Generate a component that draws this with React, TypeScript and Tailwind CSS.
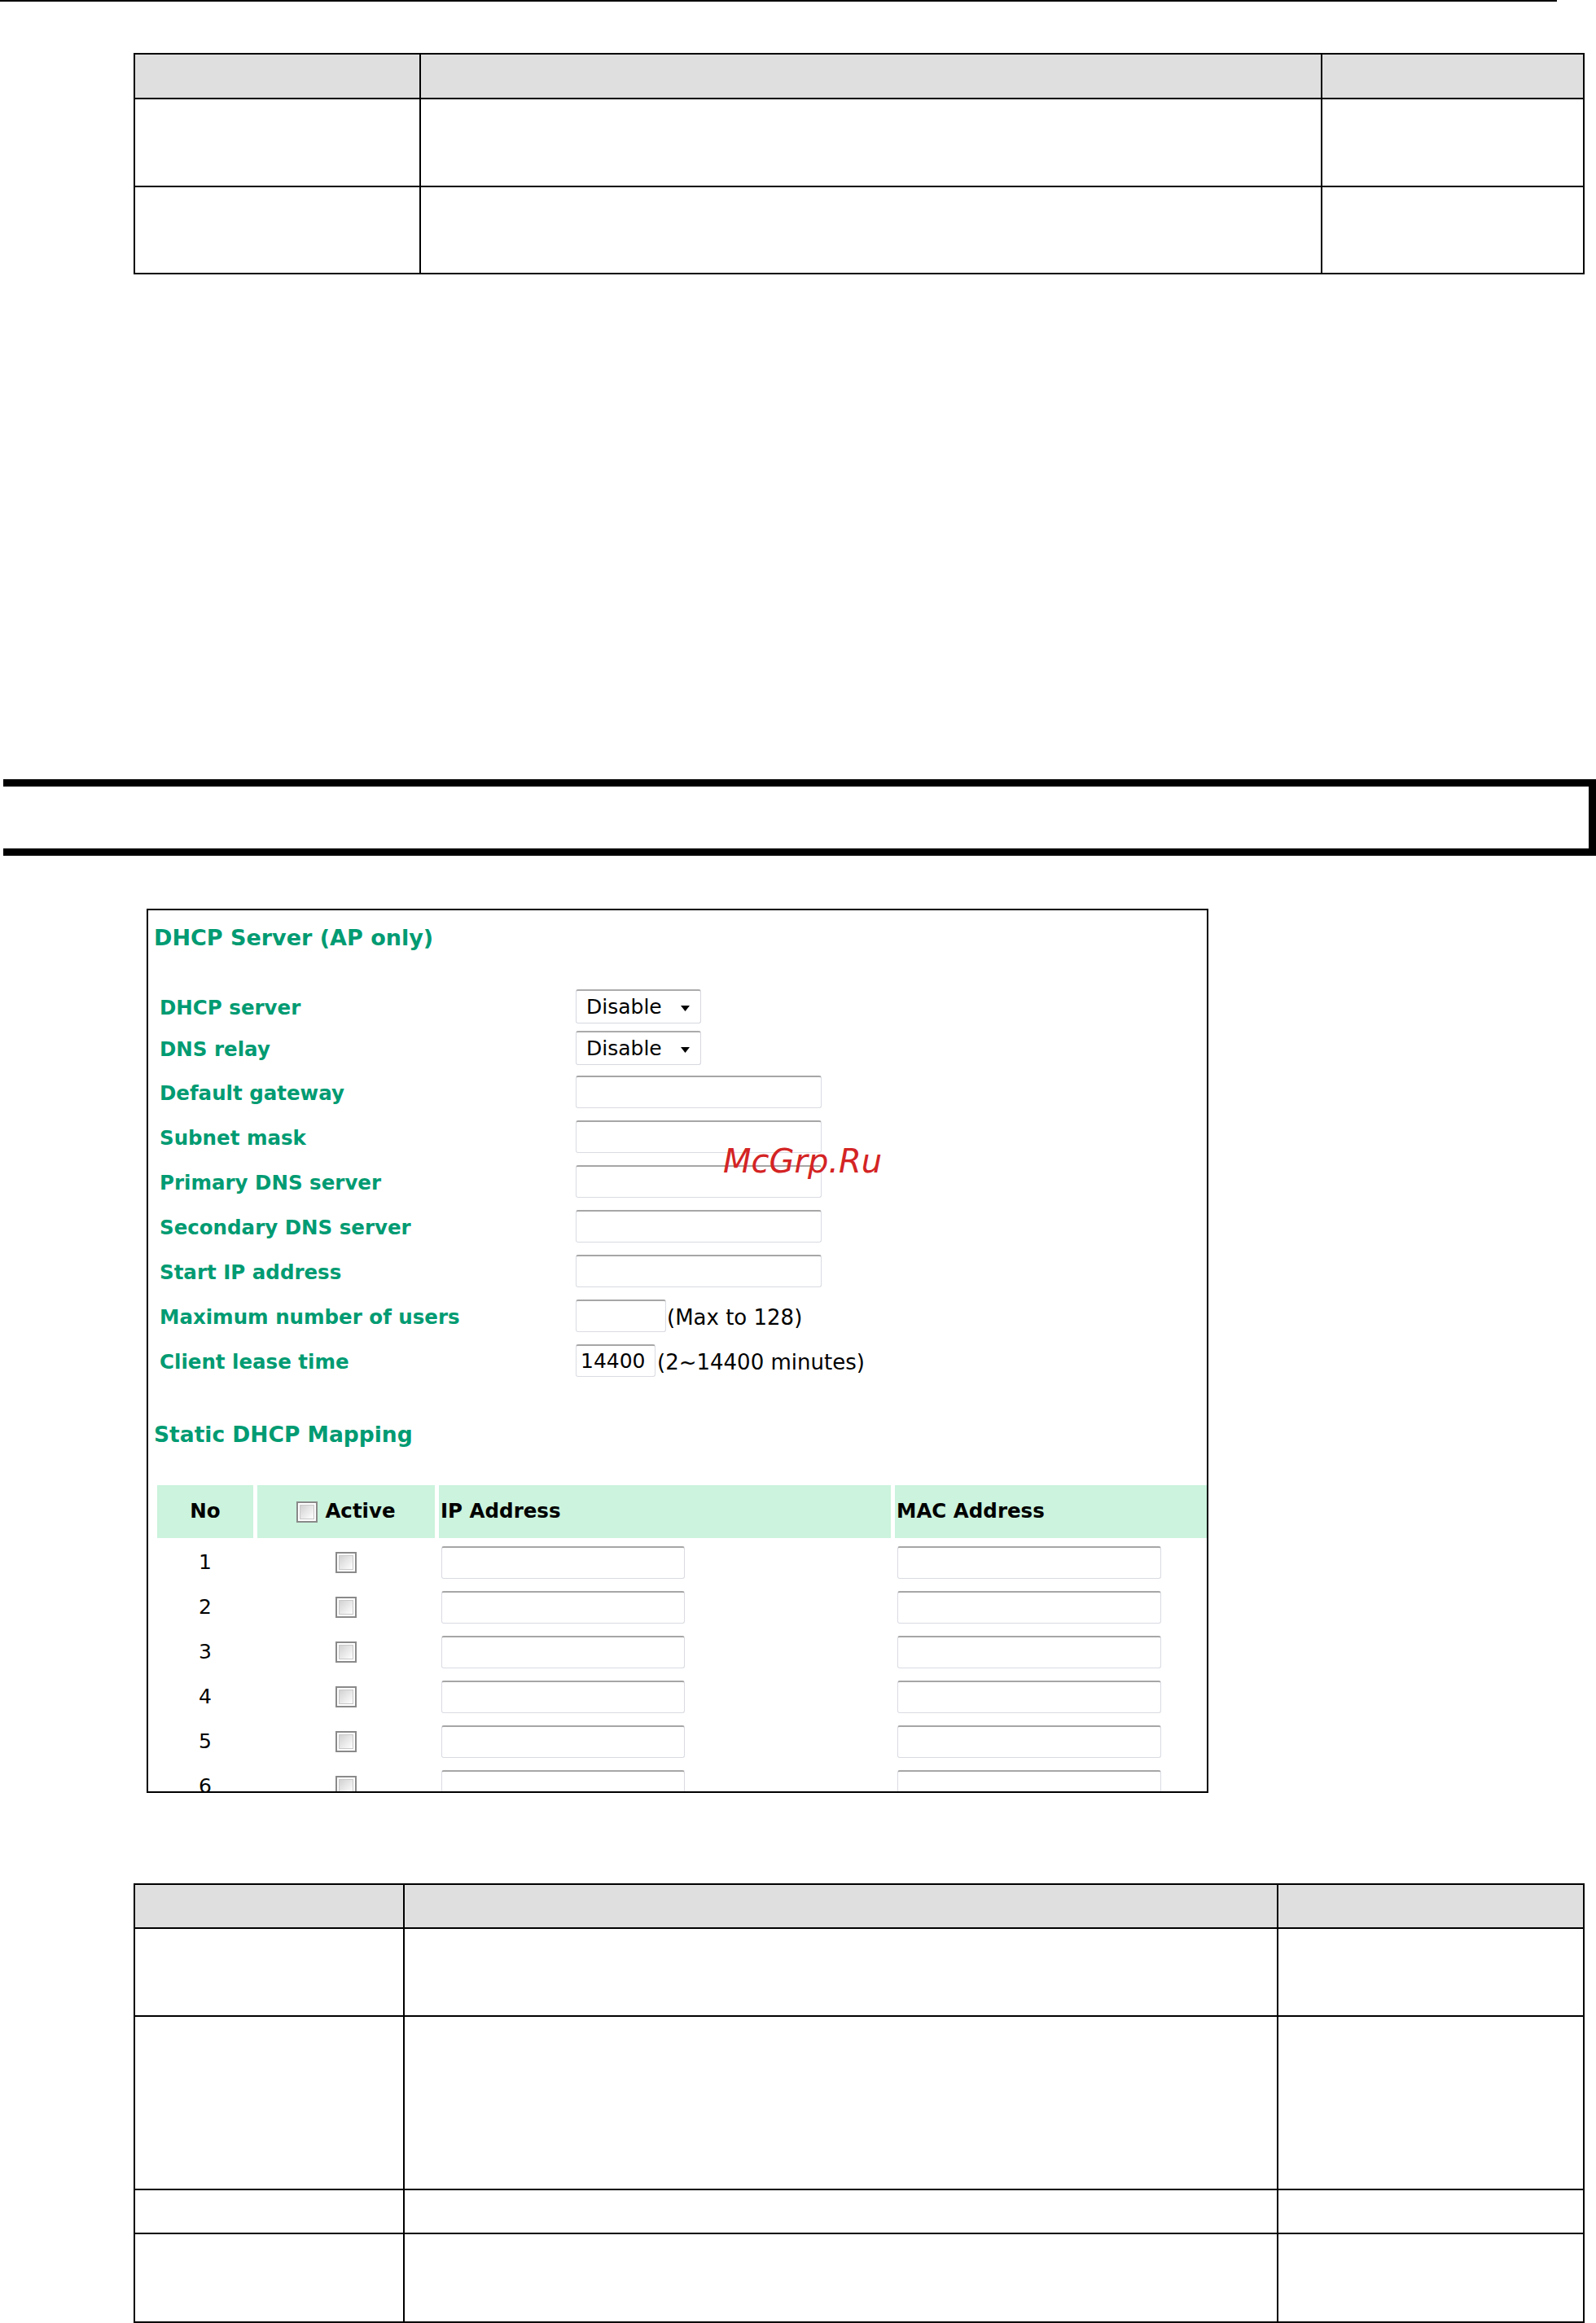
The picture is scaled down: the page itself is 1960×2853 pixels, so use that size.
import React from "react";

const FONT = "font-['DejaVu_Sans',Verdana,sans-serif]";

function DocTable({
  cols,
  rows,
  className,
}: {
  cols: string[];
  rows: string[];
  className: string;
}) {
  return (
    <div className={`flex flex-col w-fit border-l-2 border-t-2 border-black ${className}`}>
      {rows.map((h, i) => (
        <div key={i} className={`flex ${h} ${i === 0 ? "bg-[#dfdfdf]" : "bg-white"}`}>
          {cols.map((w, j) => (
            <div key={j} className={`${w} h-full border-r-2 border-b-2 border-black`} />
          ))}
        </div>
      ))}
    </div>
  );
}

function SelectBox() {
  return (
    <div className="w-[154px] h-[42px] flex items-center justify-between pl-[12px] pr-[13px] bg-white border border-[#d6d8e0] border-t-2 border-t-[#ababab] rounded-[3px]">
      <span className="text-[25px] leading-none text-black">Disable</span>
      <svg width="11" height="7" viewBox="0 0 11 7" className="mt-[3px]">
        <polygon points="0,0 11,0 5.5,7" fill="#000" />
      </svg>
    </div>
  );
}

function TextBox({ w, children }: { w: string; children?: React.ReactNode }) {
  return (
    <div
      className={`${w} h-[40px] flex items-center pl-[5px] bg-white border border-[#d9dbe2] border-t-2 border-t-[#a6a6a6] rounded-[3px] text-[25px] leading-none text-black`}
    >
      {children}
    </div>
  );
}

function Check() {
  return (
    <div className="w-[26px] h-[26px] border-2 border-[#8a8a8a] bg-white p-[2px]">
      <div className="w-full h-full border border-[#c8c8c8] bg-gradient-to-br from-[#d2d2d2] to-[#ffffff]" />
    </div>
  );
}

function FormRow({
  label,
  h,
  children,
}: {
  label: string;
  h: string;
  children: React.ReactNode;
}) {
  return (
    <div className={`flex items-center ${h}`}>
      <div className="w-[511px] pt-[5px] text-[24.5px] leading-none font-bold text-[#009b72] whitespace-nowrap">
        {label}
      </div>
      <div className="flex items-center">{children}</div>
    </div>
  );
}

export default function App() {
  const mappingRows = [1, 2, 3, 4, 5, 6];
  return (
    <div className={`relative w-[1960px] min-h-[2853px] bg-white ${FONT} overflow-hidden`}>
      {/* top rule */}
      <div className="w-[1912px] h-[2px] bg-black" />

      <DocTable
        className="ml-[164px] mt-[63px]"
        cols={["w-[351px]", "w-[1107px]", "w-[322px]"]}
        rows={["h-[55px]", "h-[108px]", "h-[107px]"]}
      />

      {/* section heading bar */}
      <div className="ml-[4px] mt-[620px] w-[1956px] h-[94px] border-t-[9px] border-b-[9px] border-r-[9px] border-black" />

      {/* screenshot */}
      <div className="ml-[180px] mt-[65px] w-[1304px] h-[1086px] border-2 border-black overflow-hidden bg-white">
        <div className="h-[66px] flex items-center pl-[7px]">
          <span className="text-[27px] leading-none font-bold text-[#009b72]">DHCP Server (AP only)</span>
        </div>
        <div className="h-[27px]" />
        <div className="pl-[14px] flex flex-col">
          <FormRow label="DHCP server" h="h-[50px]">
            <SelectBox />
          </FormRow>
          <FormRow label="DNS relay" h="h-[52px]">
            <SelectBox />
          </FormRow>
          <FormRow label="Default gateway" h="h-[55px]">
            <TextBox w="w-[302px]" />
          </FormRow>
          <FormRow label="Subnet mask" h="h-[55px]">
            <TextBox w="w-[302px]" />
          </FormRow>
          <FormRow label="Primary DNS server" h="h-[55px]">
            <TextBox w="w-[302px]" />
          </FormRow>
          <FormRow label="Secondary DNS server" h="h-[55px]">
            <TextBox w="w-[302px]" />
          </FormRow>
          <FormRow label="Start IP address" h="h-[55px]">
            <TextBox w="w-[302px]" />
          </FormRow>
          <FormRow label="Maximum number of users" h="h-[55px]">
            <TextBox w="w-[111px]" />
            <span className="ml-[1px] pt-[4px] text-[26px] leading-none text-black whitespace-nowrap">(Max to 128)</span>
          </FormRow>
          <FormRow label="Client lease time" h="h-[55px]">
            <TextBox w="w-[98px]">14400</TextBox>
            <span className="ml-[2px] pt-[4px] text-[26px] leading-none text-black whitespace-nowrap">
              (2~14400 minutes)
            </span>
          </FormRow>
        </div>

        <div className="h-[126px] flex items-center pl-[7px] pt-[2px]">
          <span className="text-[26.5px] leading-none font-bold text-[#009b72]">Static DHCP Mapping</span>
        </div>

        <div className="pl-[11px] flex flex-col">
          <div className="flex gap-[5px] h-[65px] text-[24.5px] leading-none font-bold text-black">
            <div className="w-[118px] bg-[#cbf3dd] flex items-center justify-center">No</div>
            <div className="w-[218px] bg-[#cbf3dd] flex items-center justify-center gap-[9px]">
              <Check />
              <span>Active</span>
            </div>
            <div className="w-[555px] bg-[#cbf3dd] flex items-center pl-[2px]">IP Address</div>
            <div className="flex-1 bg-[#cbf3dd] flex items-center pl-[2px]">MAC Address</div>
          </div>
          <div className="mt-[2px] flex flex-col">
            {mappingRows.map((n) => (
              <div key={n} className="flex gap-[5px] h-[55px] items-center">
                <div className="w-[118px] flex justify-center text-[25px] leading-none text-black">{n}</div>
                <div className="w-[218px] flex justify-center">
                  <Check />
                </div>
                <div className="w-[555px] pl-[3px]">
                  <TextBox w="w-[299px]" />
                </div>
                <div className="flex-1 pl-[3px]">
                  <TextBox w="w-[324px]" />
                </div>
              </div>
            ))}
          </div>
        </div>
      </div>

      <DocTable
        className="ml-[164px] mt-[111px]"
        cols={["w-[331px]", "w-[1073px]", "w-[376px]"]}
        rows={["h-[54px]", "h-[108px]", "h-[213px]", "h-[54px]", "h-[109px]"]}
      />

      {/* watermark */}
      <div className="absolute left-[888px] top-[1406px] text-[40px] leading-none italic text-[#d42424] whitespace-nowrap">
        McGrp.Ru
      </div>
    </div>
  );
}
